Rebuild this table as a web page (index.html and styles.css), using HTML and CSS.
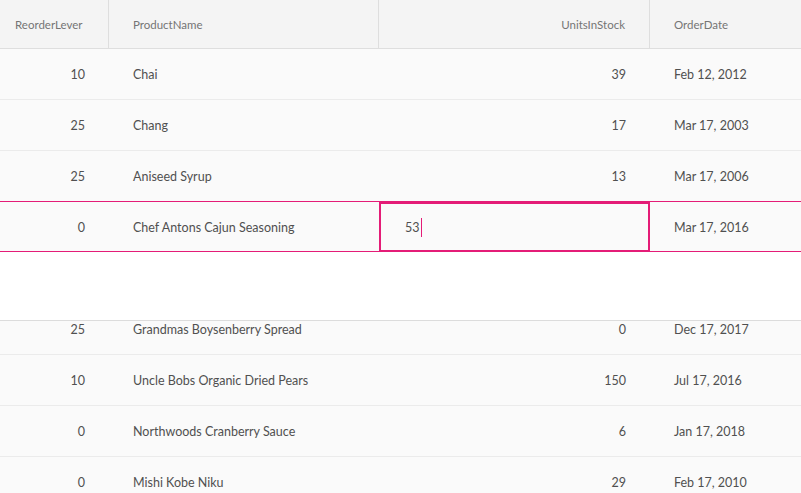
FILE: index.html
```html
<!DOCTYPE html>
<html>
<head>
<meta charset="utf-8">
<link rel="stylesheet" href="styles.css">
</head>
<body>
<div class="grid">
  <div class="row head">
    <div class="cell first">ReorderLever</div>
    <div class="cell">ProductName</div>
    <div class="cell num">UnitsInStock</div>
    <div class="cell">OrderDate</div>
  </div>
  <div class="row"><div class="cell num">10</div><div class="cell">Chai</div><div class="cell num">39</div><div class="cell">Feb 12, 2012</div></div>
  <div class="row"><div class="cell num">25</div><div class="cell">Chang</div><div class="cell num">17</div><div class="cell">Mar 17, 2003</div></div>
  <div class="row pre-edit"><div class="cell num">25</div><div class="cell">Aniseed Syrup</div><div class="cell num">13</div><div class="cell">Mar 17, 2006</div></div>
  <div class="row edit"><div class="cell num">0</div><div class="cell">Chef Antons Cajun Seasoning</div><div class="cell editcell"><div class="editor">53<span class="caret"></span></div></div><div class="cell">Mar 17, 2016</div></div>
  <div class="gap"></div>
  <div class="viewport">
    <div class="rows-shift">
      <div class="row"><div class="cell num">25</div><div class="cell">Grandmas Boysenberry Spread</div><div class="cell num">0</div><div class="cell">Dec 17, 2017</div></div>
      <div class="row"><div class="cell num">10</div><div class="cell">Uncle Bobs Organic Dried Pears</div><div class="cell num">150</div><div class="cell">Jul 17, 2016</div></div>
      <div class="row"><div class="cell num">0</div><div class="cell">Northwoods Cranberry Sauce</div><div class="cell num">6</div><div class="cell">Jan 17, 2018</div></div>
      <div class="row"><div class="cell num">0</div><div class="cell">Mishi Kobe Niku</div><div class="cell num">29</div><div class="cell">Feb 17, 2010</div></div>
    </div>
  </div>
</div>
</body>
</html>
```
FILE: styles.css
```css
html, body {
  margin: 0;
  padding: 0;
  background: #ffffff;
  overflow: hidden;
}
body {
  font-family: Lato, "Liberation Sans", sans-serif;
  font-size: 12.5px;
  color: #505050;
}
.grid {
  width: 801px;
  height: 493px;
  overflow: hidden;
  display: flex;
  flex-direction: column;
}
.row {
  display: grid;
  grid-template-columns: 109px 270px 271px 151px;
  height: 51px;
  box-sizing: border-box;
  background: #fafafa;
  border-bottom: 1px solid #ebebeb;
  flex: none;
}
.cell {
  display: flex;
  align-items: center;
  padding: 0 24px;
  white-space: nowrap;
  overflow: visible;
  min-width: 0;
}
.cell.num {
  justify-content: flex-end;
}
.head {
  height: 49px;
  background: #f4f4f4;
  border-bottom: 1px solid #dedede;
  font-size: 11.5px;
  color: #757575;
}
.head .cell {
  border-right: 1px solid #dedede;
}
.head .cell:last-child {
  border-right: none;
}
.head .cell.first {
  padding-left: 15px;
}
.pre-edit {
  height: 50px;
  border-bottom: none;
}
.row.edit {
  height: 51px;
  border-top: 1px solid #e41c77;
  border-bottom: 1px solid #e41c77;
}
.edit .cell {
  padding-top: 1px;
}
.edit .editcell {
  position: relative;
  padding: 0;
}
.editor {
  position: absolute;
  top: 0;
  left: 0;
  width: 271px;
  height: 50px;
  box-sizing: border-box;
  border: 2px solid #e41c77;
  background: #fafafa;
  display: flex;
  align-items: center;
  padding: 1px 0 0 24px;
}
.caret {
  display: inline-block;
  width: 1px;
  height: 19px;
  background-color: #e41c77;
  margin-left: 1px;
}
.gap {
  height: 68px;
  flex: none;
  background: #ffffff;
}
.viewport {
  flex: 1;
  overflow: hidden;
  border-top: 1px solid #dcdcdc;
}
.rows-shift {
  margin-top: -17px;
}
```
